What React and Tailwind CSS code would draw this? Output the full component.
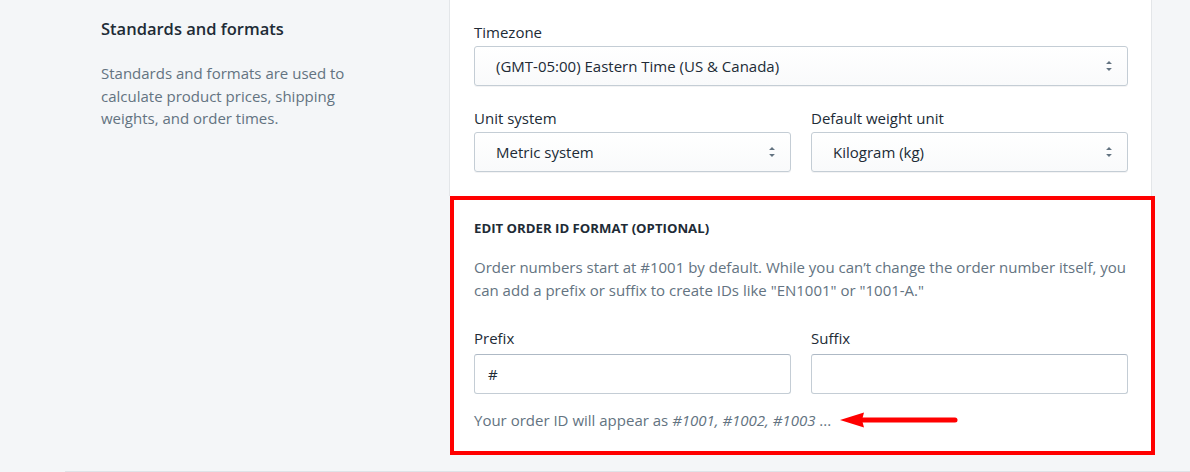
import React from 'react';

const SelectArrows = () => (
  <svg viewBox="0 0 20 20" className="w-5 h-5 fill-[#637381]">
    <path d="M13 8l-3-3-3 3h6zm-.1 4L10 14.9 7.1 12h5.8z" />
  </svg>
);

const FakeSelect = ({ value }) => (
  <div className="h-10 flex items-center justify-between pl-[21px] pr-2 rounded-[3px] border border-[#c4cdd5] bg-gradient-to-b from-white to-[#f9fafb] shadow-[0_1px_0_rgba(22,29,37,0.05)] text-[#212b36]">
    <span>{value}</span>
    <SelectArrows />
  </div>
);

const Field = ({ label, children }) => (
  <div className="flex-1 min-w-0">
    <div className="leading-[22px] mb-[3px] text-[#212b36]">{label}</div>
    {children}
  </div>
);

const TextInput = ({ value }) => (
  <div className="h-10 flex items-center px-[13px] rounded-[3px] border border-[#c4cdd5] border-t-[#aeb9c5] bg-white text-[#212b36]">
    {value}
  </div>
);

export default function App() {
  return (
    <div className="w-[1190px] h-[472px] overflow-hidden bg-[#f4f6f8] flex flex-col font-['Open_Sans',sans-serif] text-[15px]">
      <div className="flex">
        <div className="w-[449px] shrink-0 pl-[101px] pt-[17px]">
          <h2 className="text-[16.5px] font-semibold leading-[24px] text-[#212b36]">Standards and formats</h2>
          <p className="mt-[21px] w-[275px] leading-[22.5px] text-[#637381]">
            Standards and formats are used to calculate product prices, shipping weights, and order times.
          </p>
        </div>

        <div className="flex flex-col">
          <div className="w-[703px] bg-white border-l border-r border-[#e3e6e9] pl-6 pr-[23px] pt-[21px] pb-6">
            <Field label="Timezone">
              <FakeSelect value="(GMT-05:00) Eastern Time (US & Canada)" />
            </Field>
            <div className="flex gap-5 mt-[21px]">
              <Field label="Unit system">
                <FakeSelect value="Metric system" />
              </Field>
              <Field label="Default weight unit">
                <FakeSelect value="Kilogram (kg)" />
              </Field>
            </div>
          </div>

          <div className="relative ml-px w-[705px] bg-white border-4 border-[#ff0000] pl-5 pr-[23px] pt-[18px] pb-[20px]">
            <h3 className="text-[13.2px] font-bold leading-[20px] uppercase text-[#212b36]">
              Edit order ID format (optional)
            </h3>
            <p className="mt-[18px] leading-[23px] text-[#637381]">
              Order numbers start at #1001 by default. While you can’t change the order number itself, you can add a prefix or suffix to create IDs like "EN1001" or "1001-A."
            </p>
            <div className="flex gap-5 mt-[25px]">
              <div className="flex-1 min-w-0">
                <div className="leading-[22px] mb-[5px] text-[#212b36]">Prefix</div>
                <TextInput value="#" />
              </div>
              <div className="flex-1 min-w-0">
                <div className="leading-[22px] mb-[5px] text-[#212b36]">Suffix</div>
                <TextInput value="" />
              </div>
            </div>
            <p className="mt-[15px] leading-[22px] text-[#637381]">
              Your order ID will appear as <em>#1001, #1002, #1003</em> ...
            </p>

            <svg className="absolute left-[386px] top-[210px] w-[120px] h-[20px]" viewBox="0 0 120 20">
              <polygon points="0,10 24,2.5 22,10 24,17.5" fill="#ff0000" />
              <line x1="20" y1="10" x2="115" y2="10" stroke="#ff0000" strokeWidth="5" strokeLinecap="round" />
            </svg>
          </div>
        </div>
      </div>

      <div className="mt-auto ml-[65px] h-px bg-[#dfe3e8]" />
    </div>
  );
}
